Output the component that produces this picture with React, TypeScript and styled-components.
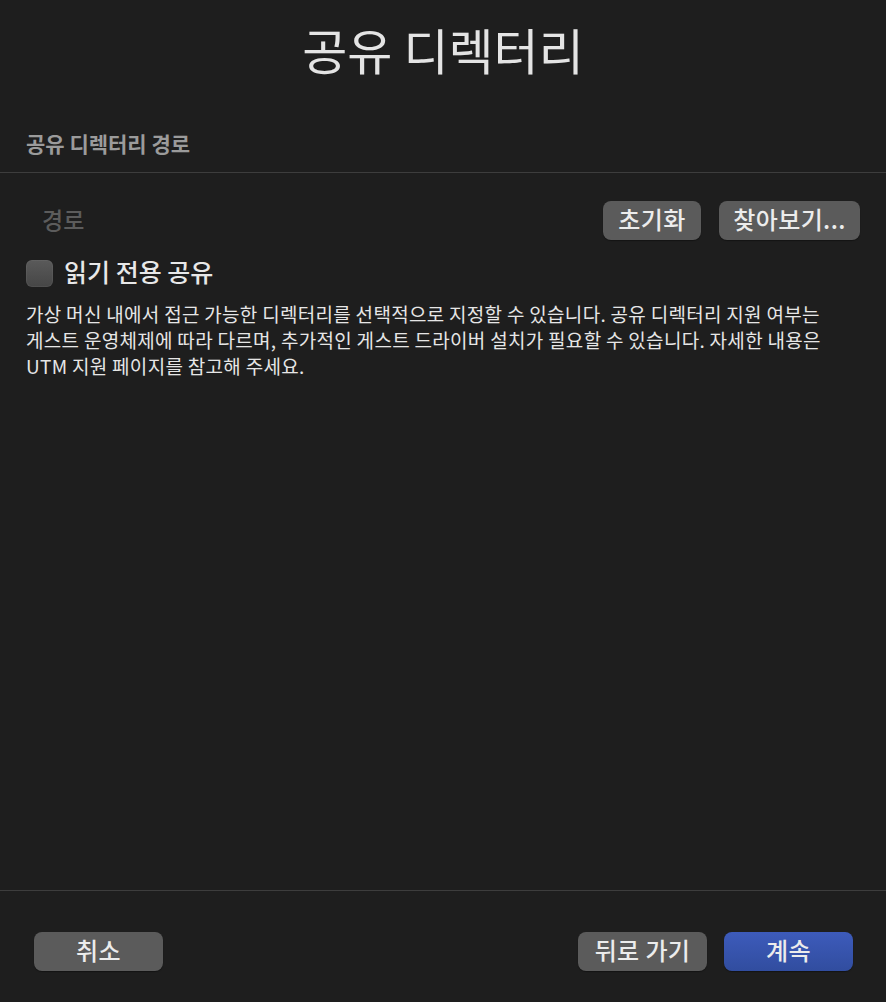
import React from 'react';
import styled, { createGlobalStyle } from 'styled-components';

const GlobalStyle = createGlobalStyle`
  html, body {
    margin: 0;
    padding: 0;
    background: #1e1e1e;
  }
  body {
    font-family: "Noto Sans CJK KR", "Noto Sans", sans-serif;
    color: #e6e6e6;
  }
`;

const Window = styled.div`
  display: flex;
  flex-direction: column;
  height: 100vh;
  background: #1e1e1e;
`;

const Title = styled.h1`
  margin: 17px 0 0;
  line-height: 64px;
  font-size: 49px;
  font-weight: 400;
  text-align: center;
  color: #e4e4e4;
`;

const SectionLabel = styled.div`
  margin: 50px 26px 0;
  padding-bottom: 17px;
  line-height: 24px;
  font-size: 21px;
  font-weight: 700;
  color: #9b9b9b;
`;

const Divider = styled.hr`
  margin: 0;
  border: none;
  height: 1px;
  background: #3d3d3d;
`;

const Content = styled.div`
  flex: 1;
  display: flex;
  flex-direction: column;
  padding: 28px 26px 0;
`;

const PathRow = styled.div`
  display: flex;
  align-items: center;
  gap: 18px;
  height: 39px;
`;

const Placeholder = styled.div`
  flex: 1;
  padding: 0 0 4px 16px;
  font-size: 23px;
  font-weight: 500;
  color: #5c5c5c;
`;

const Button = styled.button<{ primary?: boolean; width?: number }>`
  height: 39px;
  min-width: ${(p) => (p.width ? `${p.width}px` : 'auto')};
  padding: 0 12px 4px;
  border: none;
  border-radius: 8px;
  font-family: inherit;
  font-size: 24px;
  letter-spacing: 0.4px;
  font-weight: 500;
  color: #ececec;
  background: ${(p) =>
    p.primary ? 'linear-gradient(#3d5bbb, #314d9f)' : '#5b5b5b'};
  box-shadow: 0 1px 1px rgba(0, 0, 0, 0.35);
`;

const CheckRow = styled.label`
  display: flex;
  align-items: center;
  gap: 11px;
  margin-top: 20px;
  height: 27px;
`;

const Checkbox = styled.span`
  width: 27px;
  height: 27px;
  border-radius: 6px;
  background: linear-gradient(#5a5a5a, #464646);
  box-shadow: inset 0 0 0 1px rgba(255, 255, 255, 0.05);
`;

const CheckLabel = styled.span`
  padding-bottom: 5px;
  font-size: 25px;
  font-weight: 500;
  color: #e8e8e8;
`;

const Description = styled.p`
  margin: 14px 0 0;
  font-size: 19px;
  line-height: 26px;
  letter-spacing: 0.3px;
  font-weight: 400;
  color: #e6e6e6;
`;

const Footer = styled.div`
  display: flex;
  align-items: flex-start;
  justify-content: space-between;
  height: 111px;
  padding: 41px 33px 0 34px;
  box-sizing: border-box;
`;

const ButtonGroup = styled.div`
  display: flex;
  gap: 17px;
`;

export default function App() {
  return (
    <>
      <GlobalStyle />
      <Window>
        <Title>공유 디렉터리</Title>
        <SectionLabel>공유 디렉터리 경로</SectionLabel>
        <Divider />
        <Content>
          <PathRow>
            <Placeholder>경로</Placeholder>
            <Button width={98}>초기화</Button>
            <Button width={141}>찾아보기...</Button>
          </PathRow>
          <CheckRow>
            <Checkbox />
            <CheckLabel>읽기 전용 공유</CheckLabel>
          </CheckRow>
          <Description>
            가상 머신 내에서 접근 가능한 디렉터리를 선택적으로 지정할 수 있습니다. 공유 디렉터리 지원 여부는
            <br />
            게스트 운영체제에 따라 다르며, 추가적인 게스트 드라이버 설치가 필요할 수 있습니다. 자세한 내용은
            <br />
            UTM 지원 페이지를 참고해 주세요.
          </Description>
        </Content>
        <Divider />
        <Footer>
          <Button width={129}>취소</Button>
          <ButtonGroup>
            <Button width={129}>뒤로 가기</Button>
            <Button primary width={129}>계속</Button>
          </ButtonGroup>
        </Footer>
      </Window>
    </>
  );
}
